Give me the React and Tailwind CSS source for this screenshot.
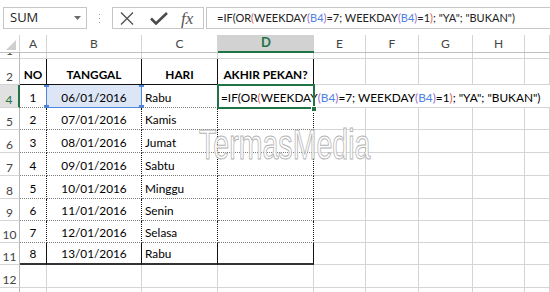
import React from "react";

const cols = [
  { k: "A", w: "w-[27px]" },
  { k: "B", w: "w-[95px]" },
  { k: "C", w: "w-[76px]" },
  { k: "D", w: "w-[96px]" },
  { k: "E", w: "w-[52px]" },
  { k: "F", w: "w-[53px]" },
  { k: "G", w: "w-[54px]" },
  { k: "H", w: "w-[52px]" },
  { k: "I", w: "w-[25px]" },
];

const rows = [
  { n: 1, h: "h-[6px]" },
  { n: 2, h: "h-[26px]", cells: ["NO", "TANGGAL", "HARI", "AKHIR PEKAN?"], head: true },
  { n: 4, h: "h-[23px]", cells: ["1", "06/01/2016", "Rabu"], active: true },
  { n: 5, h: "h-[22px]", cells: ["2", "07/01/2016", "Kamis"] },
  { n: 6, h: "h-[23px]", cells: ["3", "08/01/2016", "Jumat"] },
  { n: 7, h: "h-[23px]", cells: ["4", "09/01/2016", "Sabtu"] },
  { n: 8, h: "h-[23px]", cells: ["5", "10/01/2016", "Minggu"] },
  { n: 9, h: "h-[22px]", cells: ["6", "11/01/2016", "Senin"] },
  { n: 10, h: "h-[22px]", cells: ["7", "12/01/2016", "Selasa"] },
  { n: 11, h: "h-[22px]", cells: ["8", "13/01/2016", "Rabu"], last: true },
  { n: 12, h: "h-[23px]" },
  { n: "", h: "h-[23px]" },
];

function Formula() {
  return (
    <>
      =IF(OR<span className="text-[#e0605a]">(</span>WEEKDAY
      <span className="text-[#9a6ad0]">(</span>
      <span className="text-[#4d84e0]">B4</span>
      <span className="text-[#9a6ad0]">)</span>=7; WEEKDAY
      <span className="text-[#9a6ad0]">(</span>
      <span className="text-[#4d84e0]">B4</span>
      <span className="text-[#9a6ad0]">)</span>=1
      <span className="text-[#e0605a]">)</span>; "YA"; "BUKAN")
    </>
  );
}

function FormulaBar() {
  return (
    <div className="h-[35px] flex items-start pt-[7px] bg-white">
      <div className="shrink-0 ml-[3px] w-[84px] h-[22px] border border-[#c6c6c6] flex items-center justify-between pl-[6px] pr-[5px] text-[13px] text-[#222] font-['Open_Sans',sans-serif]">
        <span>SUM</span>
        <svg width="7" height="4" viewBox="0 0 7 4"><path d="M0 0h7L3.5 4z" fill="#6b6b6b" /></svg>
      </div>
      <div className="shrink-0 w-[25px] h-[22px] flex flex-col items-center justify-center gap-[3px]">
        <span className="w-[1px] h-[1px] bg-[#9a9a9a]" />
        <span className="w-[1px] h-[1px] bg-[#9a9a9a]" />
        <span className="w-[1px] h-[1px] bg-[#9a9a9a]" />
      </div>
      <div className="shrink-0 w-[92px] h-[22px] border border-[#c6c6c6] flex items-center">
        <svg className="ml-[7px]" width="14" height="13" viewBox="0 0 14 13">
          <path d="M1 0.5L13 12.5M13 0.5L1 12.5" stroke="#555" strokeWidth="1.4" fill="none" />
        </svg>
        <svg className="ml-[16px]" width="18" height="13" viewBox="0 0 18 13">
          <path d="M1 6.5L6 11.5L17 1" stroke="#4a4a4a" strokeWidth="2.6" fill="none" />
        </svg>
        <span className="ml-[13px] text-[17px] leading-none italic text-[#555] font-['Liberation_Serif',serif]">fx</span>
      </div>
      <div className="ml-[2px] min-w-0 flex-1 h-[22px] border-y border-l border-[#c6c6c6] flex items-center pl-[10px] whitespace-nowrap overflow-hidden text-[11px] text-[#222] font-['Lato',sans-serif]">
        <Formula />
      </div>
    </div>
  );
}

function ColumnHeader() {
  return (
    <div className="h-[18px] flex border-b border-[#c0c0c0] text-[12px] text-[#444]">
      <div className="shrink-0 w-[20px] border-r border-[#d5d5d5] flex items-end justify-end pr-[3px] pb-[2px]">
        <svg width="10" height="10" viewBox="0 0 10 10"><path d="M10 0V10H0z" fill="#cfcfcf" /></svg>
      </div>
      {cols.map((c) =>
        c.k === "D" ? (
          <div key={c.k} className={`${c.w} shrink-0 bg-[#d2d2d2] border-b-2 border-[#217346] -mb-[1px] flex items-center justify-center font-bold text-[#217346] text-[13px]`}>
            D
          </div>
        ) : (
          <div key={c.k} className={`${c.w} shrink-0 border-r border-[#d5d5d5] flex items-center justify-center`}>
            {c.k === "I" ? "" : c.k}
          </div>
        )
      )}
    </div>
  );
}

function cellBorder(r, i) {
  const n = r.n;
  const inTable = i < 4 && typeof n === "number" && n >= 2 && n <= 11;
  let right = "border-r border-[#d4d4d4]";
  let bottom = "border-b border-[#d4d4d4]";
  if (inTable) right = "border-r border-[#111]";
  if (i < 4 && typeof n === "number") {
    if (n === 1 || n === 2) bottom = "border-b border-[#111]";
    else if (n === 11) bottom = "border-b-2 border-b-[#333]";
    else if (n >= 4 && n <= 10) bottom = "border-b border-dotted border-b-[#7a7a7a]";
  }
  return `${right} ${bottom}`;
}

function Row({ r }) {
  return (
    <div className={`${r.h} flex overflow-hidden`}>
      <div
        className={`w-[20px] shrink-0 flex items-end justify-center pb-[1px] text-[12px] leading-none border-b border-[#d5d5d5] ${
          r.active ? "bg-[#e1e1e1] text-[#217346] border-r-2 border-r-[#217346]" : "text-[#444] border-r border-r-[#b8b8b8]"
        }`}
      >
        {r.n}
      </div>
      {cols.map((c, i) => {
        const v = r.cells ? r.cells[i] : null;
        const align = r.head || i < 2 ? "justify-center" : "justify-start pl-[3px]";
        const isB4 = r.active && i === 1;
        return (
          <div
            key={c.k}
            className={`${c.w} shrink-0 relative flex items-end pb-[3px] text-[11.8px] leading-none text-black ${align} ${cellBorder(r, i)} ${
              r.head ? "font-bold" : ""
            } ${isB4 ? "bg-[#dce6f7]" : ""}`}
          >
            {v}
            {isB4 && (
              <>
                <div className="absolute inset-[-1px] border border-[#4d84e0]" />
                <div className="absolute -left-[3px] -top-[3px] w-[5px] h-[5px] bg-[#4d84e0]" />
                <div className="absolute -right-[3px] -top-[3px] w-[5px] h-[5px] bg-[#4d84e0]" />
                <div className="absolute -left-[3px] -bottom-[3px] w-[5px] h-[5px] bg-[#4d84e0]" />
                <div className="absolute -right-[3px] -bottom-[3px] w-[5px] h-[5px] bg-[#4d84e0]" />
              </>
            )}
          </div>
        );
      })}
    </div>
  );
}

export default function App() {
  return (
    <div className="w-[550px] h-[292px] overflow-hidden bg-white relative font-['Lato',sans-serif] select-none">
      <FormulaBar />
      <ColumnHeader />
      {rows.map((r, idx) => (
        <Row key={idx} r={r} />
      ))}

      {/* active cell D4 in edit mode, text spills over E..H */}
      <div className="absolute left-[218px] top-[85px] w-[332px] h-[22px] bg-white flex items-end pb-[3px] pl-[3px] whitespace-nowrap text-[11.8px] leading-none text-black font-['Lato',sans-serif]">
        <Formula />
      </div>
      <div className="absolute left-[217px] top-[84px] w-[98px] h-[25px] border-2 border-[#217346]" />
      <div className="absolute left-[311px] top-[106px] w-[6px] h-[6px] bg-[#217346] border border-white" />

      {/* watermark */}
      <div className="absolute left-[199px] top-[124px] pointer-events-none">
        <span className="inline-block origin-left scale-x-[0.68] text-[42px] leading-none text-white font-['Liberation_Sans',sans-serif] [-webkit-text-stroke:1px_#aaaaaa] opacity-90">
          TermasMedia
        </span>
      </div>
    </div>
  );
}
